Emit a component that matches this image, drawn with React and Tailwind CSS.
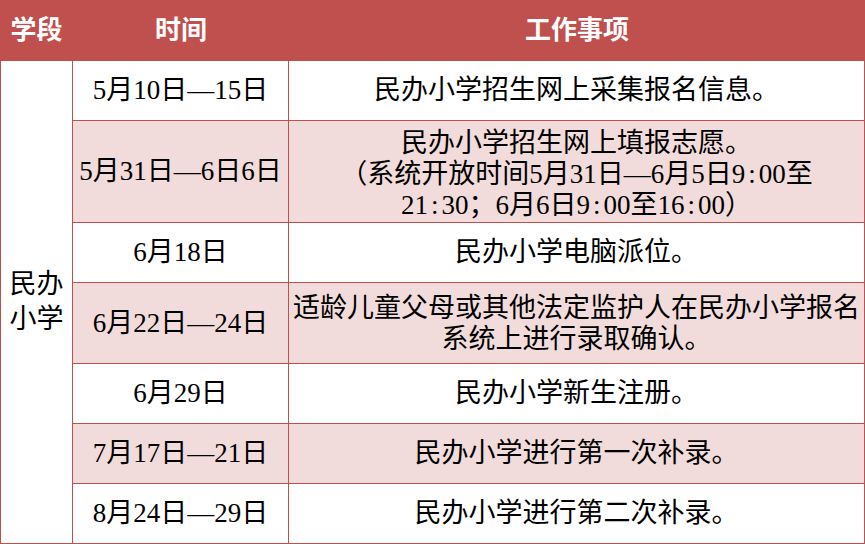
import React from 'react';

const rows = [
  { time: '5月10日—15日', task: ['民办小学招生网上采集报名信息。'], h: 'h-[60px]', pink: false },
  {
    time: '5月31日—6日6日',
    task: ['民办小学招生网上填报志愿。', '（系统开放时间5月31日—6月5日9:00至', '21:30；6月6日9:00至16:00）'],
    h: 'h-[102px]',
    pink: true,
    pad: 'pt-[6px]',
  },
  { time: '6月18日', task: ['民办小学电脑派位。'], h: 'h-[60px]', pink: false },
  { time: '6月22日—24日', task: ['适龄儿童父母或其他法定监护人在民办小学报名', '系统上进行录取确认。'], h: 'h-[81px]', pink: true, pad: 'pt-[2px]' },
  { time: '6月29日', task: ['民办小学新生注册。'], h: 'h-[60px]', pink: false },
  { time: '7月17日—21日', task: ['民办小学进行第一次补录。'], h: 'h-[60px]', pink: true },
  { time: '8月24日—29日', task: ['民办小学进行第二次补录。'], h: 'h-[60px]', pink: false },
];

// colons are half-width in the original font, so give them a half-em box
const Line = ({ text }) => (
  <div>
    {text.split(/(:)/).map((part, k) =>
      part === ':' ? (
        <span key={k} className="inline-block w-[0.5em] text-center">:</span>
      ) : (
        <React.Fragment key={k}>{part}</React.Fragment>
      )
    )}
  </div>
);

const App = () => {
  return (
    <div
      className="w-[865px] h-[544px] bg-white text-black overflow-hidden"
      style={{ fontFamily: '"Liberation Serif", "Noto Sans CJK SC", serif' }}
    >
      {/* header */}
      <div className="flex h-[61px] bg-[#c0504d] text-white font-bold text-[26px] border-b border-[#c0504d]">
        <div className="w-[73px] flex items-center justify-center">学段</div>
        <div className="w-[216px] flex items-center justify-center">时间</div>
        <div className="w-[576px] flex items-center justify-center">工作事项</div>
      </div>

      <div className="flex border-l border-[#c0504d]">
        <div className="w-[72px] h-[483px] flex items-center justify-center text-center border-r border-b border-[#c0504d] text-[27px] leading-[35px] px-[8px]">
          民办小学
        </div>
        <div className="flex flex-col">
          {rows.map((r, i) => (
            <div key={i} className={`flex ${r.h} ${r.pink ? 'bg-[#f2dcdb]' : 'bg-white'}`}>
              <div className="w-[216px] flex items-center justify-center border-r border-b border-[#c0504d] text-[27px] whitespace-nowrap">
                {r.time}
              </div>
              <div className={`w-[576px] flex flex-col items-center justify-center border-r border-b border-[#c0504d] text-[27px] leading-[31px] text-center whitespace-nowrap ${r.pad || ''}`}>
                {r.task.map((t, j) => (
                  <Line key={j} text={t} />
                ))}
              </div>
            </div>
          ))}
        </div>
      </div>
    </div>
  );
};

export default App;
